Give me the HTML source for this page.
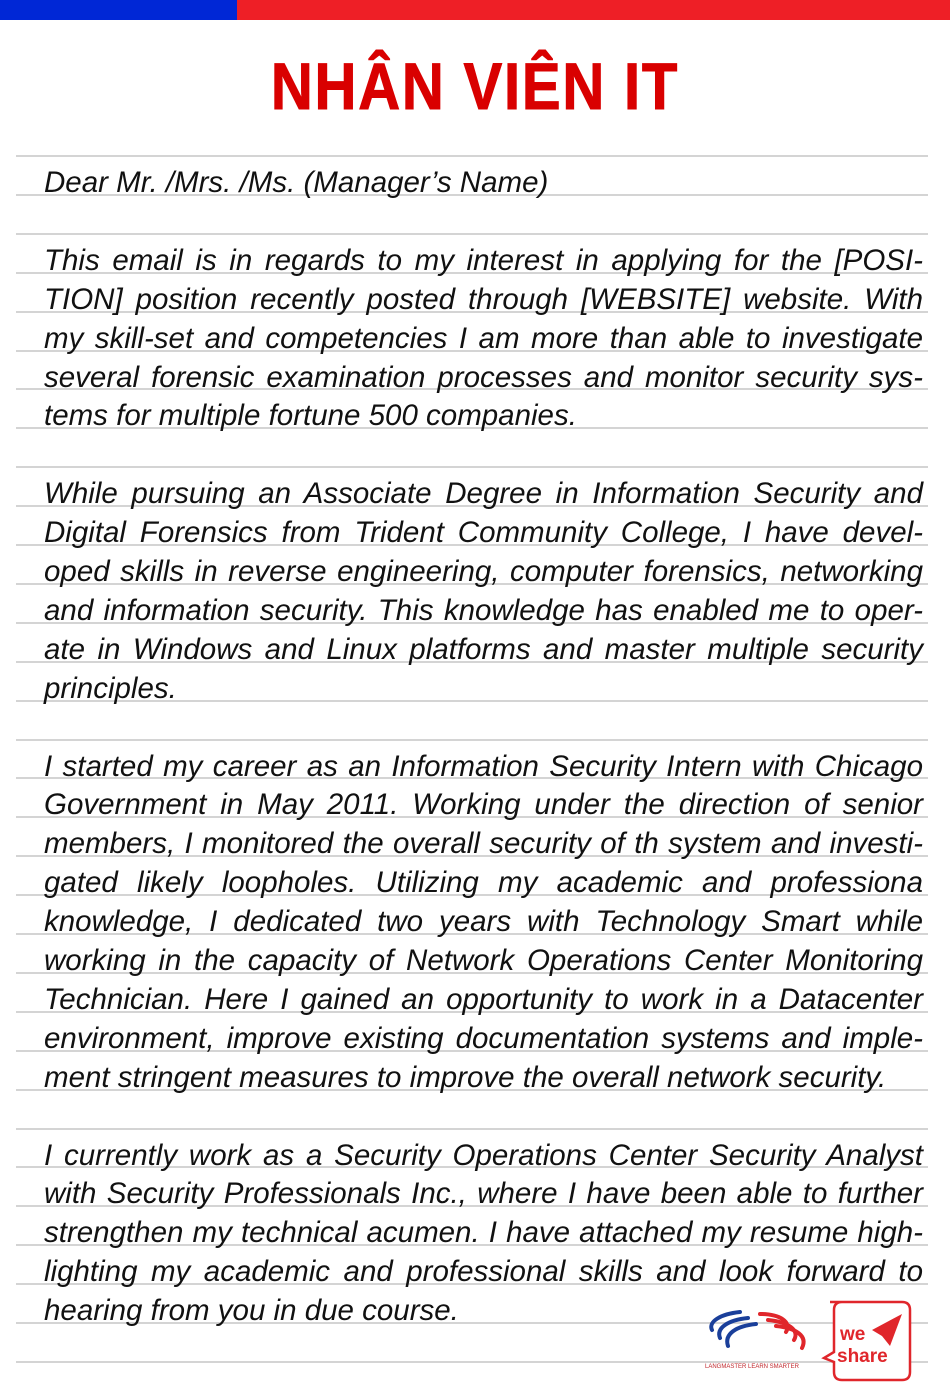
<!DOCTYPE html>
<html><head><meta charset="utf-8"><style>
body{margin:0;width:950px;height:1400px;position:relative;background:#fff;overflow:hidden;font-family:"Liberation Sans",sans-serif}
.bar{position:absolute;top:0;height:20px}
.rule{position:absolute;left:16px;width:912px;height:2px;background:#d4d4d4}
.t{position:absolute;left:44px;width:879px;height:36px;line-height:36px;font-style:italic;font-size:29.5px;color:#111;text-align:justify;text-align-last:justify;white-space:nowrap}
.l{text-align-last:left}
h1{position:absolute;top:51px;left:0;width:950px;margin:0;text-align:center;font-size:66px;line-height:70px;color:#d90000;font-weight:bold;transform:scaleX(.88);letter-spacing:2px;-webkit-text-stroke:1px #d90000}
</style></head><body>
<div class="bar" style="left:0;width:237px;background:#0027d6"></div>
<div class="bar" style="left:237px;width:713px;background:#ee1f26"></div>
<h1>NHÂN VIÊN IT</h1>
<div id="r"></div>
<script>
var h='';for(var k=0;k<32;k++){var y=Math.round(155+38.9*k);if(y<1400)h+='<div class="rule" style="top:'+y+'px"></div>';}
var L=[[0,"Dear Mr. /Mrs. /Ms. (Manager’s Name)",1],
[2,"This email is in regards to my interest in applying for the [POSI-"],
[3,"TION] position recently posted through [WEBSITE] website. With"],
[4,"my skill-set and competencies I am more than able to investigate"],
[5,"several forensic examination processes and monitor security sys-"],
[6,"tems for multiple fortune 500 companies.",1],
[8,"While pursuing an Associate Degree in Information Security and"],
[9,"Digital Forensics from Trident Community College, I have devel-"],
[10,"oped skills in reverse engineering, computer forensics, networking"],
[11,"and information security. This knowledge has enabled me to oper-"],
[12,"ate in Windows and Linux platforms and master multiple security"],
[13,"principles.",1],
[15,"I started my career as an Information Security Intern with Chicago"],
[16,"Government in May 2011. Working under the direction of senior"],
[17,"members, I monitored the overall security of th system and investi-"],
[18,"gated likely loopholes. Utilizing my academic and professiona"],
[19,"knowledge, I dedicated two years with Technology Smart while"],
[20,"working in the capacity of Network Operations Center Monitoring"],
[21,"Technician. Here I gained an opportunity to work in a Datacenter"],
[22,"environment, improve existing documentation systems and imple-"],
[23,"ment stringent measures to improve the overall network security.",1],
[25,"I currently work as a Security Operations Center Security Analyst"],
[26,"with Security Professionals Inc., where I have been able to further"],
[27,"strengthen my technical acumen. I have attached my resume high-"],
[28,"lighting my academic and professional skills and look forward to"],
[29,"hearing from you in due course.",1]];
L.forEach(function(a){var y=Math.round(182+38.9*a[0]-17);h+='<div class="t'+(a[2]?' l':'')+'" style="top:'+y+'px">'+a[1]+'</div>';});
document.getElementById('r').innerHTML=h;
</script>
<svg style="position:absolute;left:700px;top:1300px" width="120" height="80" viewBox="0 0 120 80">
<g fill="none" stroke-width="4" stroke-linecap="round">
<path d="M40 12 C20 14 8 22 12 30" stroke="#1a3f9a"/>
<path d="M48 18 C28 20 16 28 20 38" stroke="#1a3f9a"/>
<path d="M56 24 C36 26 24 34 28 46" stroke="#1a3f9a"/>
<path d="M60 14 C80 14 92 22 86 32" stroke="#e0262b"/>
<path d="M68 20 C88 22 100 30 94 40" stroke="#e0262b"/>
<path d="M76 26 C96 28 108 36 102 48" stroke="#e0262b"/>
</g>
<text x="5" y="68" font-size="6" fill="#c0262b" font-family="Liberation Sans">LANGMASTER LEARN SMARTER</text>
</svg>
<svg style="position:absolute;left:820px;top:1300px" width="92" height="82" viewBox="0 0 92 82">
<path d="M10 2 H82 Q90 2 90 10 V72 Q90 80 82 80 H22 Q14 80 14 72 V62 L4 58 L14 52 V10 Q14 2 22 2Z" fill="#fff" stroke="#e0262b" stroke-width="2.5"/>
<text x="20" y="40" font-size="19" font-weight="bold" fill="#e0262b" font-family="Liberation Sans">we</text>
<text x="17" y="62" font-size="19" font-weight="bold" fill="#e0262b" font-family="Liberation Sans">share</text>
<path d="M52 30 L82 14 L70 46 L62 36Z" fill="#e0262b"/>
</svg>
</body></html>
